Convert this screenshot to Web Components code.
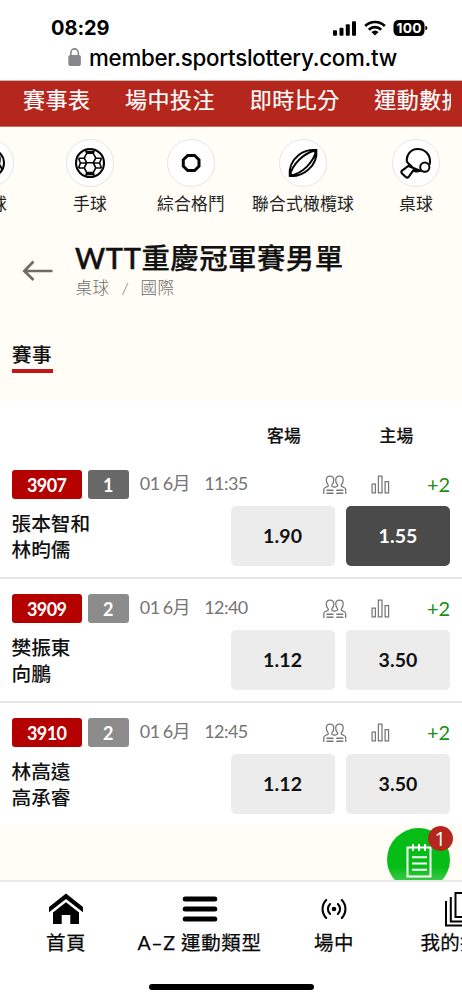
<!DOCTYPE html>
<html lang="zh-Hant">
<head>
<meta charset="utf-8">
<title>WTT重慶冠軍賽男單</title>
<style>
html,body{margin:0;padding:0;height:100%;overflow:hidden;background:#fffdf5}
body{font-family:Lato,"Noto Sans CJK TC",sans-serif;color:#111}
</style>
</head>
<body>
<lottery-app></lottery-app>
<script>
const define = (name, html, setup) => customElements.define(name, class extends HTMLElement {
  connectedCallback() {
    if (this.shadowRoot) return;
    const root = this.attachShadow({mode: 'open'});
    const t = document.createElement('template');
    t.innerHTML = typeof html === 'function' ? html(this) : html;
    root.append(t.content.cloneNode(true));
    if (setup) setup(this, root);
  }
});

/* One line of text whose tracking is adjusted to fill a given width. */
define('fit-text', el => `<style>
  :host{display:inline-block;white-space:nowrap;width:${el.getAttribute('w')}px}
  span{display:inline-block;white-space:pre}
</style><span></span>`, (el, root) => {
  const s = root.querySelector('span');
  s.textContent = el.getAttribute('text');
  const n = [...s.textContent].length;
  s.style.letterSpacing = ((+el.getAttribute('w') - s.getBoundingClientRect().width) / n) + 'px';
});

define('phone-status', `<style>
  :host{display:block;background:#fff;border-bottom:1px solid #c9b8b4;box-sizing:border-box;height:81px;color:#000;font-family:Inter,sans-serif}
  .top{display:flex;height:27px;padding:15px 34px 0 51px;justify-content:space-between;align-items:center}
  .time{font-weight:700;font-size:20px;line-height:27px}
  .ic{display:flex;align-items:center}
  .url{display:flex;height:31px;padding-left:67px;align-items:center;font-size:22.3px;font-weight:500;line-height:31px}
  .url svg{margin-right:7px}
</style>
<div class="top"><fit-text class="time" w="58.5" text="08:29"></fit-text>
<svg class="ic" width="96" height="18" viewBox="0 1.2 96 18">
  <rect x="1" y="11.5" width="4" height="5.5" rx="1"/><rect x="7.5" y="9" width="4" height="8" rx="1"/><rect x="13.8" y="5.5" width="4" height="11.5" rx="1"/><rect x="20" y="2.5" width="4" height="14.5" rx="1"/>
  <g fill="none" stroke="#000" stroke-width="2.7"><path d="M33.2 7.2a14 14 0 0 1 19.6 0"/><path d="M36.8 10.9a9 9 0 0 1 12.4 0"/></g><path d="M39.4 13.3a5.4 5.4 0 0 1 7.2 0L43 16.8z"/>
  <rect x="61.5" y="1.3" width="31" height="16" rx="5"/><path d="M93.4 7v4.4q2-.4 2-2.2t-2-2.2z"/>
  <text x="77" y="14.2" fill="#fff" text-anchor="middle" font-size="13.8" font-weight="700" font-family="Inter" textLength="25">100</text>
</svg></div>
<div class="url"><svg width="15" height="20" viewBox="0 0 15 20"><rect x="1.3" y="7" width="12.6" height="11" rx="2" fill="#87878b"/><path d="M3.9 8V4.6a3.7 3.7 0 0 1 7.4 0V8" fill="none" stroke="#87878b" stroke-width="1.6"/></svg><fit-text w="308" text="member.sportslottery.com.tw"></fit-text></div>`);

define('top-menu', `<style>
  :host{display:block;height:46px;background:#b5261c;color:#fff;border-bottom:1px solid #ce6c5f;box-sizing:border-box}
  nav{display:flex;width:428px;overflow:hidden;padding-left:23px;font-size:22px;line-height:38px;gap:34.6px;-webkit-text-stroke:.2px #fff}
  fit-text{flex:none}
</style><nav><fit-text w="67.5" text="賽事表"></fit-text><fit-text w="90" text="場中投注"></fit-text><fit-text w="90" text="即時比分"></fit-text><fit-text w="90" text="運動數據"></fit-text></nav>`);

define('sport-item', el => `<style>
  :host{display:flex;flex-direction:column;align-items:center;color:#222}
  .c{width:45.5px;height:45.5px;border:1px solid #e6e5e4;border-radius:50%;background:#fff;display:grid;place-items:center;box-sizing:content-box}
  .l{margin-top:5.5px;font-size:16.8px;line-height:24px}
</style><div class="c"><slot></slot></div><fit-text class="l" w="${el.getAttribute('w')}" text="${el.getAttribute('label')}"></fit-text>`);

define('sports-strip', `<style>
  :host{display:grid;grid-template-columns:107px 93px 109px 115px 111px;margin-left:-63.5px;padding-top:12px;height:102px;box-sizing:border-box;overflow:hidden}
  svg{display:block;fill:none;stroke:#050505;stroke-width:2}
</style>
<sport-item label="羽球" w="34"><svg width="32" height="32" viewBox="0 0 32 32"><circle cx="16" cy="16" r="14"/><path d="M20 4q8 4 5 13l3 5"/></svg></sport-item>
<sport-item label="手球" w="34"><svg width="32" height="32" viewBox="0 0 32 32"><circle cx="16" cy="16" r="14" stroke-width="2.1"/><g stroke-width="1.6"><path d="M12.8 6.2h6.4l2.6 4.8-2.6 4.8h-6.4L10.2 11zM12.8 15.8h6.4l2.6 5-2.6 4.8h-6.4l-2.6-4.8zM12.8 6.2 11.6 3M19.2 6.2 20.4 3M12.8 25.6 11.6 29M19.2 25.6 20.4 29M10.2 11l-5.6.2M21.8 11l5.6.2M10.2 20.8l-5.6.2M21.8 20.8l5.6.2M4.6 11.2l1.8 4.8-1.8 5M27.4 11.2 25.6 16l1.8 5M6.4 16h6.4M25.6 16h-6.4M11.4 4.6h9.2M11.4 27.4h9.2"/></g></svg></sport-item>
<sport-item label="綜合格鬥" w="68"><svg width="32" height="32" viewBox="0 0 32 32"><path d="M12.7 8.4h6.9l4.4 4.4v6.4l-4.4 4.4h-6.9l-4.4-4.4v-6.4z" stroke-width="3"/></svg></sport-item>
<sport-item label="聯合式橄欖球" w="102"><svg width="32" height="32" viewBox="0 0 32 32"><path d="M2.7 29C1.8 20 5.5 13 12 7.8 18 3.2 24 2.6 29.4 3c.8 8-2 14.5-8.2 19.8C15.5 27.6 9.5 29.8 2.7 29zM2.7 29C5 18 16 6 29.4 3M2.7 29C16 26 26.5 15.5 29.4 3" stroke-width="1.9"/><path d="M2.4 25.5 6.5 29.5M25 2.5 29.7 7" stroke-width="1.5"/></svg></sport-item>
<sport-item label="桌球" w="34"><svg width="32" height="32" viewBox="0 0 32 32"><path d="M7 15C5.7 8 10.8 2 17.7 2 24.8 2 30 7.4 30 14.2c0 1.3-.1 2.3-.5 3.5M20.5 23.8c-3.2 1-5.6.7-7.5 0L8.7 29.8Q7.4 31.3 5.8 30L2 26.5Q.7 25 2.1 23.6L8.3 19zM7 15l9.5 9.3" stroke-width="2.1"/><circle cx="24.8" cy="20.2" r="4.6"/></svg></sport-item>`);

define('event-title', `<style>
  :host{display:flex;height:111px;box-sizing:border-box;padding:9px 0 0 22px}
  svg{margin-top:21px;margin-right:22px;flex:none}
  .t{display:block;font-size:28.4px;font-weight:500;line-height:40px;color:#111;-webkit-text-stroke:.25px #111}
  .h{display:flex}
  .l{font-size:29px;-webkit-text-stroke:.5px #111}
  .b{display:flex;font-size:16.5px;line-height:20px;color:#6b6b6b;font-weight:300;margin-left:.5px}
</style>
<svg width="31" height="22" viewBox="0 0 31 22" fill="none" stroke="#6e6c68" stroke-width="2.7"><path d="M30.5 12H3M11.5 2.5 2.3 12 11.5 21"/></svg>
<div><div class="h"><fit-text class="t l" w="66.5" text="WTT"></fit-text><fit-text class="t" w="202" text="重慶冠軍賽男單"></fit-text></div>
<div class="b"><fit-text w="34" text="桌球"></fit-text><fit-text style="margin:0 11px 0 12px" w="8" text="/"></fit-text><fit-text w="34" text="國際"></fit-text></div></div>`);

define('section-tab', `<style>
  :host{display:block;height:61px;padding-left:11.5px}
  div{width:41px;height:32.5px;box-sizing:border-box;border-bottom:4px solid #c4151a;font-size:19.5px;line-height:29px;font-weight:500;-webkit-text-stroke:.15px #111;text-align:center}
</style><div><fit-text w="40" text="賽事"></fit-text></div>`);

define('odds-button', el => `<style>
  :host{display:flex;align-items:center;justify-content:center;height:60px;border-radius:5px;background:${el.hasAttribute('on')?'#4a4a4a':'#ececec'};color:${el.hasAttribute('on')?'#fff':'#111'};font-size:19.5px;font-weight:700}
</style><fit-text w="39" text="${el.getAttribute('v')}"></fit-text>`);

define('match-row', el => { const a = n => el.getAttribute(n); return `<style>
  :host{display:block;height:124px;box-sizing:border-box;padding:15.3px 12px 0 11.5px;border-bottom:2px solid ${el.hasAttribute('last')?'transparent':'#e7e6e5'}}
  .m{display:flex;height:28.5px;align-items:center;color:#757575}
  .id,.n{height:28.5px;border-radius:3px;display:flex;align-items:center;justify-content:center;color:#fff;font-size:18px;font-weight:700;line-height:24px;padding-top:1px;box-sizing:border-box;background:#b50000;width:70.5px}
  .n{width:40.7px;margin:0 11px 0 6px;background:${a('n')==='1'?'#686868':'#8c8c8c'}}
  .d{font-size:18px;line-height:24px;margin-top:-4px}
  .s{display:flex;margin-left:auto;align-items:center}
  svg{fill:none;stroke:#777;stroke-width:1.25}
  .p{margin:1px 24px 0 0}.g{margin-right:37px}
  .plus{color:#1c8d17;font-size:20px;line-height:24px;margin-top:-1px}
  .w{display:grid;grid-template-columns:1fr 104px 104px;column-gap:11.4px;margin-top:7px}
  .names{font-size:19.7px;line-height:26px;font-weight:500;color:#111;padding-top:5px}
  .names div{height:26px}
</style>
<div class="m"><div class="id"><fit-text w="39.5" text="${a('code')}"></fit-text></div><div class="n">${a('n')}</div>
<fit-text class="d" w="20" text="01"></fit-text><fit-text class="d" style="margin-left:3px" w="27" text="6月"></fit-text><fit-text class="d" style="margin-left:14.5px" w="43.5" text="${a('t')}"></fit-text>
<div class="s"><svg class="p" width="24" height="20" viewBox="0 0 24 20"><path d="M.8 19v-4.2q0-1.5 1.3-2.1l2.7-1.3q.9-.5.3-1.5Q3.3 7.9 3.3 5 3.3 1 7 1t3.8 4q0 2.9-1.8 4.9-.6 1 .3 1.4l2.5 1 2.4-1q.9-.4.3-1.4-1.8-2-1.8-4.9 0-4 3.8-4t3.7 4q0 2.9-1.8 4.9-.6 1 .3 1.5l2.7 1.3q1.3.6 1.3 2.1V19"/><path d="M3.5 15.3h7M3.5 18.3h7M13.3 15.3h7M13.3 18.3h7" stroke-width="1.5"/></svg>
<svg class="g" width="19" height="20" viewBox="0 0 19 20"><path d="M1.1 9h3.3v8.9H1.1zM7.4 1.2h3.6v16.7H7.4zM14.1 6.7h3.5v11.2h-3.5z"/></svg><fit-text class="plus" w="23" text="+2"></fit-text></div></div>
<div class="w"><div class="names"><div>${a('a')}</div><div>${a('b')}</div></div><odds-button v="${a('x')}"></odds-button><odds-button v="${a('y')}" ${a('n')==='1'?'on':''}></odds-button></div>`; });

define('match-list', `<style>
  :host{display:block;background:#fff;height:424px;border-radius:5px;box-sizing:border-box}
  .h{height:54px;box-sizing:border-box;padding:22px 13px 0 0;display:grid;grid-template-columns:1fr 104px 105px;column-gap:8px;justify-items:center;font-size:16.8px;line-height:26px;font-weight:500;-webkit-text-stroke:.2px #111}
</style><div class="h"><span></span><fit-text w="34" text="客場"></fit-text><fit-text w="34" text="主場"></fit-text></div>
<match-row code="3907" n="1" t="11:35" a="張本智和" b="林昀儒" x="1.90" y="1.55"></match-row>
<match-row code="3909" n="2" t="12:40" a="樊振東" b="向鵬" x="1.12" y="3.50"></match-row>
<match-row last code="3910" n="2" t="12:45" a="林高遠" b="高承睿" x="1.12" y="3.50"></match-row>`);

define('slip-button', `<style>
  :host{position:absolute;left:387px;top:828px;width:63px;height:63px;border-radius:50%;background:linear-gradient(#05bd16 62%,#38ca45 83%)}
  svg{position:absolute;left:19px;top:14px}
  b{position:absolute;left:40.5px;top:-2.5px;width:25.5px;height:25.5px;border-radius:50%;background:#b5261c;color:#fff;font:400 20px/26px "Open Sans",sans-serif;text-align:center}
</style><svg width="26" height="38" viewBox="0 0 26 38" fill="none" stroke="#fff" stroke-width="2"><path d="M1.5 5.5h23v29h-23zM7 2v7M13 2v7M19 2v7M6 15.2h15M6 21.5h15M6 27.7h15"/></svg><b>1</b>`);

define('nav-item', el => `<style>
  :host{display:flex;flex-direction:column;align-items:center;color:#080808}
  .i{height:32px;margin-top:12px;display:flex;align-items:center}
  .l{font-size:19.5px;line-height:28px;margin-top:4px;-webkit-text-stroke:.25px #080808}
</style><div class="i"><slot></slot></div><fit-text class="l" w="${el.getAttribute('w')}" text="${el.getAttribute('label')}"></fit-text>`);

define('bottom-nav', `<style>
  :host{position:absolute;left:0;top:880px;width:462px;height:120px;background:#fff;border-top:2px solid #e9e9e7;box-sizing:border-box;overflow:hidden}
  .g{display:grid;grid-template-columns:132px 135px 134px 118px;height:80px;margin-top:-1px}
  svg{display:block}
  .home{width:165px;height:6px;border-radius:3px;background:#000;margin:23px 0 0 149px}
</style><div class="g">
<nav-item label="首頁" w="40"><svg width="36" height="32" viewBox="0 0 36 32"><path d="M18 .5 35 14v5.3L18 6 1 19.3V14z"/><path d="M18 9.3 31 19.5V31h-8.7v-9h-8.6v9H5V19.5z"/></svg></nav-item>
<nav-item label="A–Z 運動類型" w="124"><svg width="36" height="28" viewBox="0 0 36 28"><path d="M3.2 4h29.6M3.2 14h29.6M3.2 24h29.6" stroke="#000" stroke-width="5" stroke-linecap="round"/></svg></nav-item>
<nav-item label="場中" w="40"><svg width="28" height="24" viewBox="0 0 28 24" fill="none" stroke="#000" stroke-width="2.1" stroke-linecap="round"><circle cx="14" cy="12" r="2.3" fill="#000" stroke="none"/><path d="M10.1 7a6.8 6.8 0 0 0 0 10M17.9 7a6.8 6.8 0 0 1 0 10M6.2 3a13 13 0 0 0 0 18M21.8 3a13 13 0 0 1 0 18"/></svg></nav-item>
<nav-item label="我的投注" w="79"><svg width="32" height="36" viewBox="0 0 32 36" fill="none" stroke="#000" stroke-width="2"><path d="M11.5 2h18v24h-18zM6.8 6v24.5h18M2 10v24.5h18"/></svg></nav-item>
</div><div class="home"></div>`);

define('lottery-app', `<style>
  :host{display:block;position:relative;width:462px;height:1000px;overflow:hidden;background:#fffdf5}
</style><phone-status></phone-status><top-menu></top-menu><sports-strip></sports-strip><event-title></event-title><section-tab></section-tab><match-list></match-list><slip-button></slip-button><bottom-nav></bottom-nav>`);
</script>
</body>
</html>
